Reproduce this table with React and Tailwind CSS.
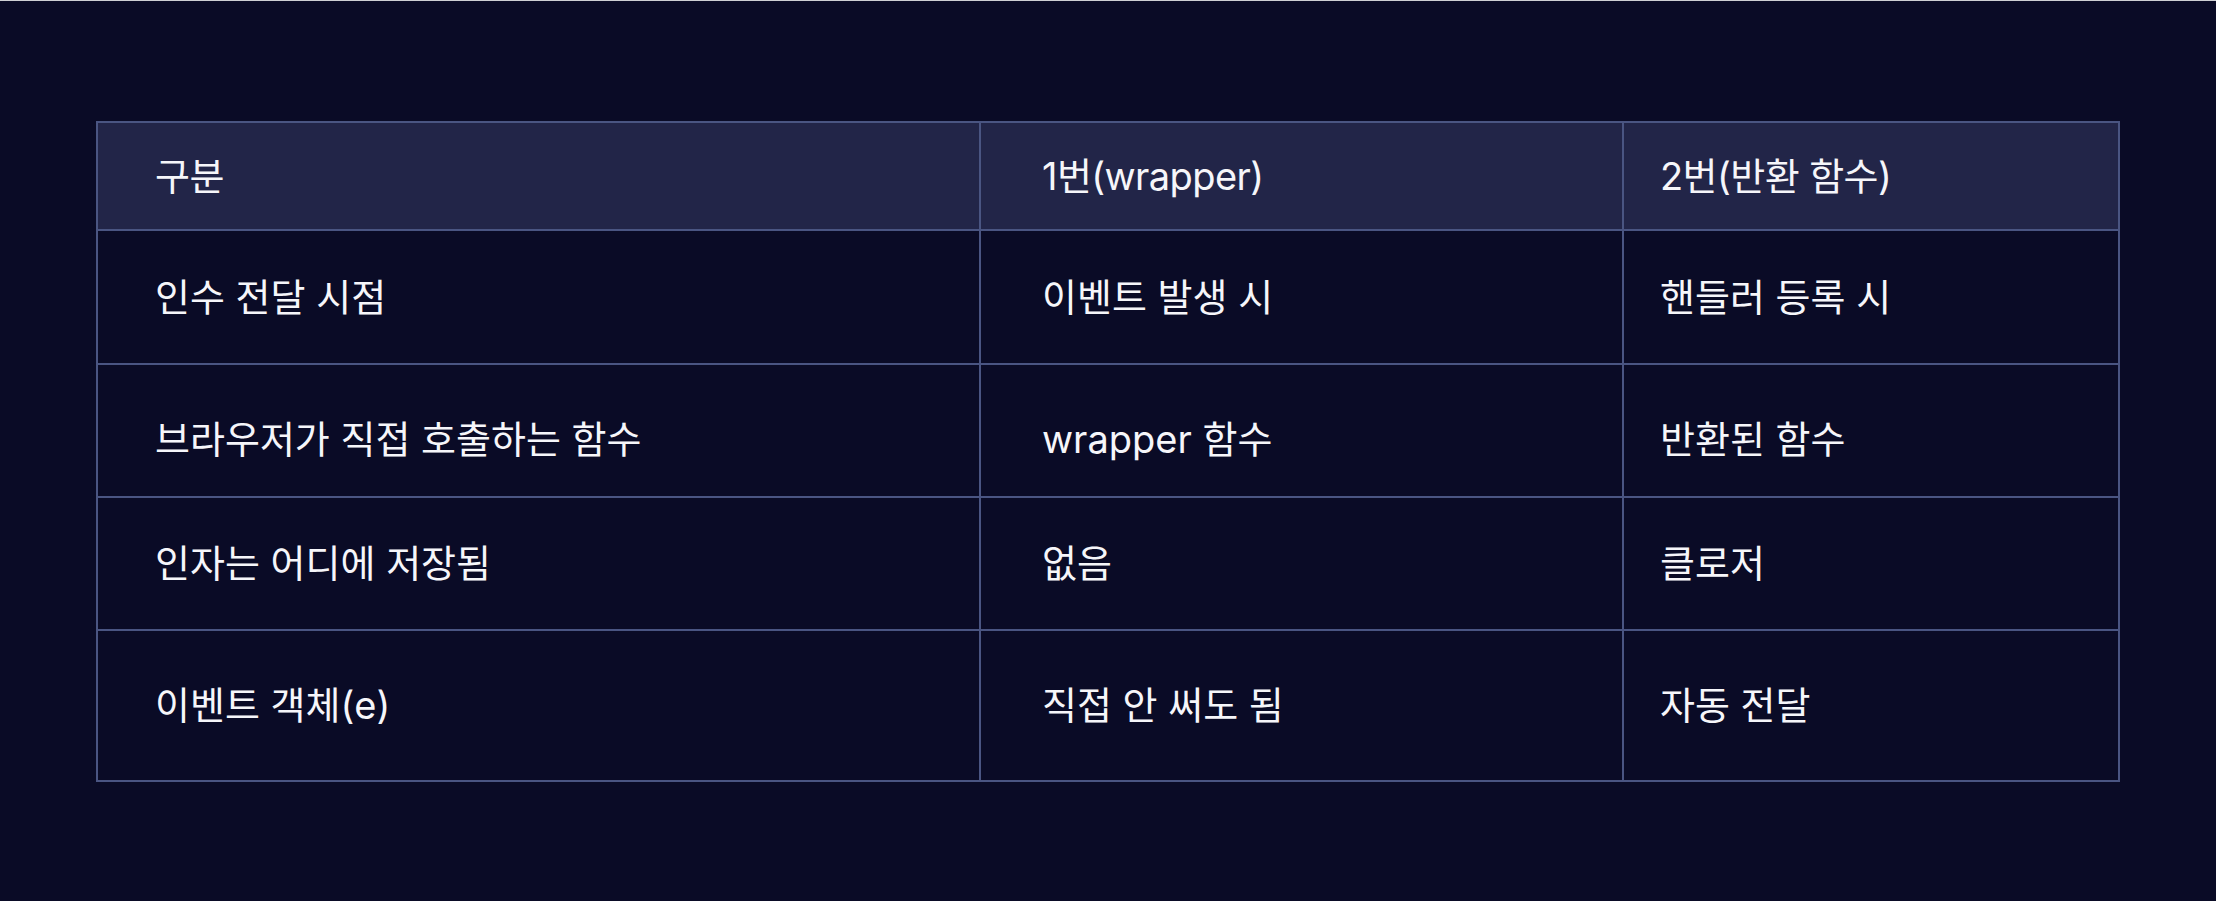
import React from 'react';

const rows = [
  { h: 'h-[134px]', shift: '', cells: ['인수 전달 시점', '이벤트 발생 시', '핸들러 등록 시'] },
  { h: 'h-[133px]', shift: 'pt-[17px]', cells: ['브라우저가 직접 호출하는 함수', 'wrapper 함수', '반환된 함수'] },
  { h: 'h-[133px]', shift: '', cells: ['인자는 어디에 저장됨', '없음', '클로저'] },
  { h: 'h-[151px]', shift: '', cells: ['이벤트 객체(e)', '직접 안 써도 됨', '자동 전달'] },
];

const pads = ['pl-[57px]', 'pl-[61px] border-l-2 border-[#4a5582]', 'pl-[36px] border-l-2 border-[#4a5582]'];

export default function App() {
  return (
    <div className="min-h-[901px] bg-[#0a0b26] text-[#f6f6fa] font-['Inter','Noto_Sans_CJK_KR',sans-serif]">
      <div className="h-px bg-[#cfd0d4]" />
      <div className="mx-[96px] mt-[120px] border-2 border-[#4a5582]">
        <div className="grid grid-cols-[881px_643px_1fr] h-[106px] bg-[#222548] text-[38px] tracking-[-0.015em]">
          {['구분', '1번(wrapper)', '2번(반환 함수)'].map((t, i) => (
            <div key={i} className={`flex items-center ${pads[i]}`}>
              <span>{t}</span>
            </div>
          ))}
        </div>
        {rows.map((r, ri) => (
          <div key={ri} className={`grid grid-cols-[881px_643px_1fr] border-t-2 border-[#4a5582] text-[38px] ${r.h}`}>
            {r.cells.map((t, i) => (
              <div key={i} className={`flex items-center ${pads[i]} ${r.shift}`}>
                <span>{t}</span>
              </div>
            ))}
          </div>
        ))}
      </div>
    </div>
  );
}
